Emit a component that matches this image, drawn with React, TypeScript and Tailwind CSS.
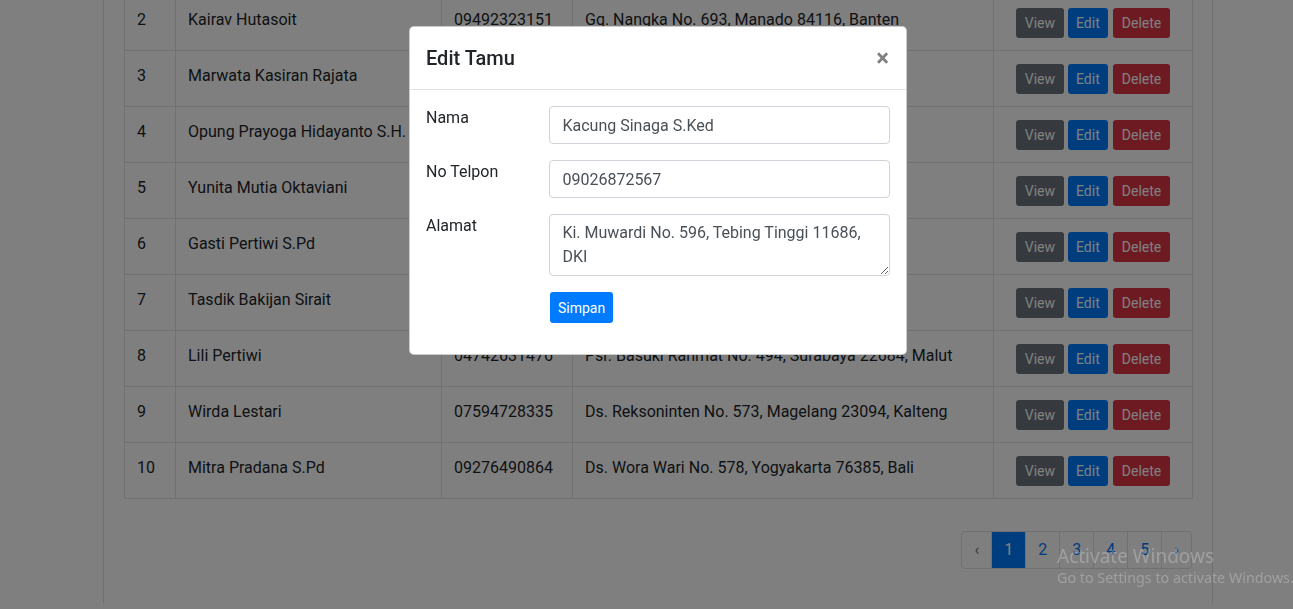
import React from "react";

interface Tamu {
  no: number;
  nama: string;
  telp: string;
  alamat: string;
}

const rows: Tamu[] = [
  { no: 2, nama: "Kairav Hutasoit", telp: "09492323151", alamat: "Gg. Nangka No. 693, Manado 84116, Banten" },
  { no: 3, nama: "Marwata Kasiran Rajata", telp: "08712450398", alamat: "Jr. Suryo No. 21, Padang 38211, Jabar" },
  { no: 4, nama: "Opung Prayoga Hidayanto S.H.", telp: "05128734410", alamat: "Ds. Bakau No. 48, Bekasi 12045, Aceh" },
  { no: 5, nama: "Yunita Mutia Oktaviani", telp: "02946381172", alamat: "Kpg. Asia No. 77, Batam 61023, Riau" },
  { no: 6, nama: "Gasti Pertiwi S.Pd", telp: "08346107925", alamat: "Jln. Cikutra No. 38, Tanjungbalai 5762, Kalsel" },
  { no: 7, nama: "Tasdik Bakijan Sirait", telp: "06619320584", alamat: "Psr. Jakarta No. 5, Bogor 40923, Jatim" },
  { no: 8, nama: "Lili Pertiwi", telp: "04742631476", alamat: "Psr. Basuki Rahmat No. 494, Surabaya 22684, Malut" },
  { no: 9, nama: "Wirda Lestari", telp: "07594728335", alamat: "Ds. Reksoninten No. 573, Magelang 23094, Kalteng" },
  { no: 10, nama: "Mitra Pradana S.Pd", telp: "09276490864", alamat: "Ds. Wora Wari No. 578, Yogyakarta 76385, Bali" },
];

const td = "border border-[#dee2e6] px-3 pt-[13px] pb-[11px] align-top leading-6";
const btn = "inline-flex h-[30px] items-center rounded-[3px] text-sm leading-none text-white";

function Pagination() {
  const link = "-ml-px flex h-[38px] items-center border border-[#dee2e6] px-3 leading-5";
  return (
    <ul className="flex justify-end">
      <li className={`${link} ml-0 rounded-l-[4px] bg-white text-[#6c757d]`}>‹</li>
      <li className={`${link} border-[#007bff] bg-[#007bff] text-white`}>1</li>
      {[2, 3, 4, 5].map((n) => (
        <li key={n} className={`${link} bg-white text-[#007bff]`}>
          {n}
        </li>
      ))}
      <li className={`${link} rounded-r-[4px] bg-white text-[#007bff]`}>›</li>
    </ul>
  );
}

export default function App() {
  return (
    <div className="relative h-[609px] overflow-hidden bg-white font-['Roboto',sans-serif] text-base text-[#212529]">
      <div className="ml-[103px] h-full w-[1110px] border-x border-[#dfdfdf] px-5">
        <table className="-mt-[6px] w-full table-fixed border-collapse">
          <colgroup>
            <col className="w-[51px]" />
            <col className="w-[266px]" />
            <col className="w-[131px]" />
            <col className="w-[421px]" />
            <col className="w-[199px]" />
          </colgroup>
          <tbody>
            {rows.map((r) => (
              <tr key={r.no}>
                <td className={td}>{r.no}</td>
                <td className={`${td} whitespace-nowrap`}>{r.nama}</td>
                <td className={td}>{r.telp}</td>
                <td className={`${td} whitespace-nowrap`}>{r.alamat}</td>
                <td className={`${td} pb-[12px]`}>
                  <div className="flex justify-center gap-1">
                    <span className={`${btn} bg-[#6c757d] px-[9px]`}>View</span>
                    <span className={`${btn} bg-[#007bff] px-2`}>Edit</span>
                    <span className={`${btn} ml-px bg-[#dc3545] px-[9px]`}>Delete</span>
                  </div>
                </td>
              </tr>
            ))}
          </tbody>
        </table>
        <div className="mt-8">
          <Pagination />
        </div>
      </div>

      {/* modal backdrop */}
      <div className="fixed inset-0 z-20 bg-black/50" />

      <div className="absolute left-[409px] top-[26px] z-30 w-[498px] rounded-[5px] border border-black/20 bg-white">
        <div className="flex items-center justify-between border-b border-[#dee2e6] px-4 py-4">
          <h5 className="text-xl font-medium leading-[30px]">Edit Tamu</h5>
          <span className="mr-[1px] text-2xl font-bold leading-none text-black/50">×</span>
        </div>
        <div className="px-4 pt-4 pb-[31px]">
          <div className="mb-4 flex">
            <label className="w-[124px] leading-6">Nama</label>
            <input
              readOnly
              value="Kacung Sinaga S.Ked"
              className="h-[38px] w-[342px] rounded-[4px] border border-[#ced4da] px-3 text-[#495057] outline-none"
            />
          </div>
          <div className="mb-4 flex">
            <label className="w-[124px] leading-6">No Telpon</label>
            <input
              readOnly
              value="09026872567"
              className="h-[38px] w-[342px] rounded-[4px] border border-[#ced4da] px-3 text-[#495057] outline-none"
            />
          </div>
          <div className="mb-4 flex">
            <label className="w-[124px] leading-6">Alamat</label>
            <textarea
              readOnly
              rows={2}
              value="Ki. Muwardi No. 596, Tebing Tinggi 11686, DKI"
              className="h-[62px] w-[342px] rounded-[4px] border border-[#ced4da] px-3 py-[6px] leading-6 text-[#495057] outline-none"
            />
          </div>
          <div className="ml-[124px]">
            <span className="inline-flex h-[31px] items-center rounded-[3px] bg-[#007bff] px-2 text-sm text-white">
              Simpan
            </span>
          </div>
        </div>
      </div>

      {/* windows watermark */}
      <div className="pointer-events-none absolute left-[1057px] top-[544px] z-40 whitespace-nowrap font-['Noto_Sans',sans-serif] text-white/25">
        <div className="text-[19px] leading-6">Activate Windows</div>
        <div className="text-[14.3px] leading-5">Go to Settings to activate Windows.</div>
      </div>
    </div>
  );
}
